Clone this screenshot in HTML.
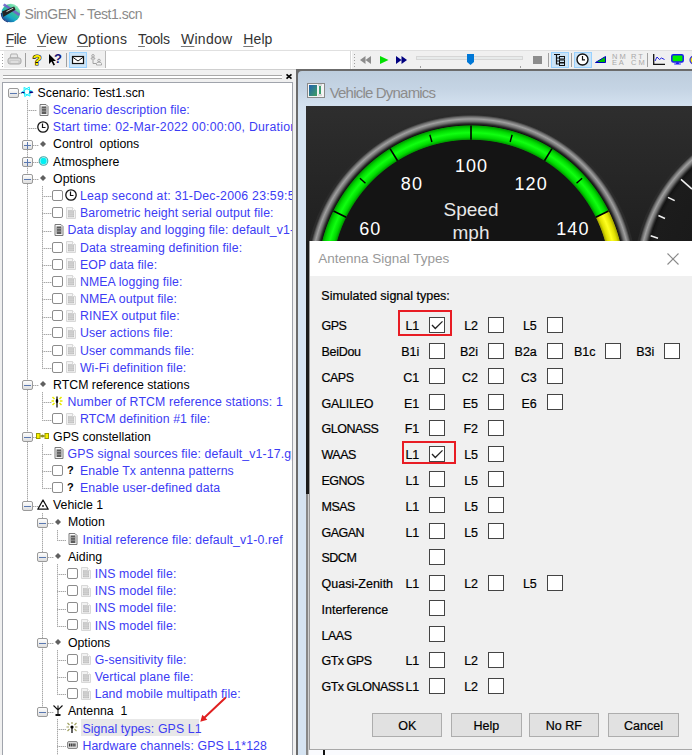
<!DOCTYPE html><html><head><meta charset="utf-8"><style>
html,body{margin:0;padding:0;}
body{width:692px;height:755px;overflow:hidden;position:relative;background:#fff;font-family:"Liberation Sans",sans-serif;}
.t{position:absolute;white-space:pre;}
.r{position:absolute;box-sizing:border-box;}
svg{position:absolute;overflow:visible;}
</style></head><body>
<svg style="left:0px;top:0px" width="24" height="26" viewBox="0 0 24 26">
<defs><linearGradient id="gl" x1="0.8" y1="0.05" x2="0.2" y2="0.95"><stop offset="0" stop-color="#a0f0c8"/><stop offset="0.35" stop-color="#3cc890"/><stop offset="0.7" stop-color="#18a8c8"/><stop offset="1" stop-color="#1a4c98"/></linearGradient></defs>
<circle cx="10.8" cy="13" r="9.3" fill="url(#gl)"/>
<path d="M1.3 13 A9.5 9.5 0 0 0 8 22" stroke="#1a3c80" stroke-width="1.2" fill="none"/>
<path d="M2.8 5.3 L4.6 3.4 L20.2 13.8 L18.8 16.2 Z" fill="#7060c8" opacity="0.9"/>
<path d="M2 11.5 L3.2 17 L15.5 9.8 L14.2 6.6 Z" fill="#242424"/>
<path d="M6.5 11.6 L13.3 8.2" stroke="#d8d8d8" stroke-width="1"/>
</svg>
<div class="t" style="left:24.50px;top:4.65px;font-size:14px;line-height:18.2px;color:#8a8a8a;letter-spacing:-0.45px;">SimGEN - Test1.scn</div>
<div class="t" style="left:5.70px;top:29.85px;font-size:14px;line-height:18.2px;color:#333;letter-spacing:-0.5px;"><u style="text-decoration-thickness:1px;text-underline-offset:2px;text-decoration-color:#777">F</u>ile</div>
<div class="t" style="left:37.00px;top:29.85px;font-size:14px;line-height:18.2px;color:#333;letter-spacing:0px;"><u style="text-decoration-thickness:1px;text-underline-offset:2px;text-decoration-color:#777">V</u>iew</div>
<div class="t" style="left:76.90px;top:29.85px;font-size:14px;line-height:18.2px;color:#333;letter-spacing:0.3px;"><u style="text-decoration-thickness:1px;text-underline-offset:2px;text-decoration-color:#777">O</u>ptions</div>
<div class="t" style="left:138.10px;top:29.85px;font-size:14px;line-height:18.2px;color:#333;letter-spacing:-0.2px;"><u style="text-decoration-thickness:1px;text-underline-offset:2px;text-decoration-color:#777">T</u>ools</div>
<div class="t" style="left:180.90px;top:29.85px;font-size:14px;line-height:18.2px;color:#333;letter-spacing:0.3px;"><u style="text-decoration-thickness:1px;text-underline-offset:2px;text-decoration-color:#777">W</u>indow</div>
<div class="t" style="left:243.30px;top:29.85px;font-size:14px;line-height:18.2px;color:#333;letter-spacing:0.1px;"><u style="text-decoration-thickness:1px;text-underline-offset:2px;text-decoration-color:#777">H</u>elp</div>
<div class="r" style="left:0px;top:50px;width:692px;height:1px;background:#e0e0e0"></div>
<div class="r" style="left:0px;top:51px;width:692px;height:18px;background:#fff"></div>
<div class="r" style="left:4px;top:51px;width:101px;height:17px;background:#f0f0f0"></div>
<div class="r" style="left:105px;top:51px;width:1px;height:17px;background:#b8b8b8"></div>
<div class="r" style="left:2px;top:54px;width:1px;height:1px;background:#a0a0a0"></div>
<div class="r" style="left:2px;top:57px;width:1px;height:1px;background:#a0a0a0"></div>
<div class="r" style="left:2px;top:60px;width:1px;height:1px;background:#a0a0a0"></div>
<div class="r" style="left:2px;top:63px;width:1px;height:1px;background:#a0a0a0"></div>
<div class="r" style="left:2px;top:66px;width:1px;height:1px;background:#a0a0a0"></div>
<div class="r" style="left:25px;top:53px;width:1px;height:14px;background:#a0a0a0"></div>
<div class="r" style="left:66px;top:53px;width:1px;height:14px;background:#a0a0a0"></div>
<div class="r" style="left:69px;top:51.5px;width:17.5px;height:16.5px;background:#cce4f7;border:1px solid #99d1ff"></div>
<svg style="left:7px;top:53px" width="15" height="13" viewBox="0 0 15 13"><path d="M4 1h6l1 4H3z" fill="#e8e8e8" stroke="#b0b0b0"/><rect x="1" y="5" width="13" height="6" rx="2" fill="#d8d8d8" stroke="#a8a8a8"/><rect x="3" y="8" width="9" height="2" fill="#f4f4f4" stroke="#b0b0b0" stroke-width=".6"/></svg>
<svg style="left:31px;top:52px" width="12" height="15" viewBox="0 0 12 15"><text x="6" y="13" text-anchor="middle" font-family="Liberation Sans" font-weight="bold" font-size="15" fill="#ffee00" stroke="#111" stroke-width="1.2" paint-order="stroke">?</text></svg>
<svg style="left:48px;top:54px" width="14" height="12" viewBox="0 0 14 12"><path d="M1 0 L1 10 L3.5 7.5 L5.5 11.5 L7 10.8 L5 7 L8 7 Z" fill="#000"/></svg>
<div class="t" style="left:54.00px;top:51.34px;font-size:13px;line-height:16.9px;color:#141478;font-weight:bold;">?</div>
<svg style="left:72px;top:56px" width="12" height="8" viewBox="0 0 12 8"><rect x="0.5" y="0.5" width="11" height="7" fill="#fff" stroke="#111" stroke-width="1.2"/><path d="M0.5 1 L6 5 L11.5 1" fill="none" stroke="#111" stroke-width="1"/></svg>
<svg style="left:90px;top:54px" width="12" height="12" viewBox="0 0 12 12"><circle cx="3" cy="1.8" r="1.3" fill="#e8e8e8" stroke="#999" stroke-width=".8"/><path d="M1 5 Q1 3.3 3 3.3 Q5 3.3 5 5 Z" fill="#f4f4f4" stroke="#999" stroke-width=".8"/><path d="M3 5.5 V9.5 H6" fill="none" stroke="#999" stroke-width=".9"/><circle cx="9" cy="6.5" r="1.3" fill="#e8e8e8" stroke="#999" stroke-width=".8"/><path d="M6.5 11 V9.5 Q6.5 8.2 9 8.2 Q11.5 8.2 11.5 9.5 V11 Z" fill="#f4f4f4" stroke="#999" stroke-width=".8"/></svg>
<div class="r" style="left:350px;top:51px;width:1px;height:18px;background:#d8d8d8"></div>
<div class="r" style="left:352px;top:51px;width:340px;height:18px;background:#f0f0f0"></div>
<div class="r" style="left:354px;top:54px;width:1px;height:1px;background:#a0a0a0"></div>
<div class="r" style="left:354px;top:57px;width:1px;height:1px;background:#a0a0a0"></div>
<div class="r" style="left:354px;top:60px;width:1px;height:1px;background:#a0a0a0"></div>
<div class="r" style="left:354px;top:63px;width:1px;height:1px;background:#a0a0a0"></div>
<div class="r" style="left:354px;top:66px;width:1px;height:1px;background:#a0a0a0"></div>
<svg style="left:360px;top:56px" width="12" height="8" viewBox="0 0 12 8"><path d="M5.5 0 L0 4 L5.5 8 Z M11 0 L5.5 4 L11 8 Z" fill="#8c8c8c"/></svg>
<svg style="left:380px;top:56px" width="9" height="8" viewBox="0 0 9 8"><path d="M0 0 L8.5 4 L0 8 Z" fill="#00e000"/></svg>
<svg style="left:396px;top:56px" width="11" height="8" viewBox="0 0 11 8"><path d="M0 0 L5.5 4 L0 8 Z M5.5 0 L11 4 L5.5 8 Z" fill="#000080"/></svg>
<div class="r" style="left:416px;top:55.5px;width:107px;height:4px;background:#e7eaea;border:1px solid #d6d6d6"></div>
<svg style="left:466.5px;top:53.5px" width="7" height="11" viewBox="0 0 7 11"><path d="M0 0 H7 V8 L3.5 11 L0 8 Z" fill="#0078d7"/></svg>
<div class="r" style="left:420px;top:65.5px;width:1px;height:2px;background:#a0a0a0"></div>
<div class="r" style="left:520px;top:65.5px;width:1px;height:2px;background:#a0a0a0"></div>
<div class="r" style="left:533px;top:56px;width:8.5px;height:7.5px;background:#8c8c8c"></div>
<div class="r" style="left:548px;top:53px;width:1px;height:14px;background:#a0a0a0"></div>
<div class="r" style="left:551px;top:51.5px;width:18px;height:16px;background:#cce4f7;border:1px solid #99d1ff"></div>
<svg style="left:553px;top:53px" width="14" height="13" viewBox="0 0 14 13"><path d="M1 1.5 H7 M3.5 1.5 V11.5 M3.5 5 H6 M3.5 8 H6 M3.5 11 H6" stroke="#111" stroke-width="1.2" fill="none"/><rect x="6.5" y="3.5" width="5" height="2.5" fill="none" stroke="#111"/><rect x="6.5" y="7" width="5" height="2.5" fill="none" stroke="#111"/><rect x="6.5" y="10" width="5" height="2.5" fill="none" stroke="#111"/></svg>
<div class="r" style="left:571px;top:53px;width:1px;height:14px;background:#a0a0a0"></div>
<div class="r" style="left:574px;top:51.5px;width:18px;height:16px;background:#cce4f7;border:1px solid #99d1ff"></div>
<svg style="left:576px;top:53px" width="13" height="13" viewBox="0 0 13 13"><circle cx="6.5" cy="6.5" r="5.5" fill="#fff" stroke="#111" stroke-width="1.4"/><path d="M6.5 3 V6.8 H9" stroke="#111" stroke-width="1.2" fill="none"/></svg>
<svg style="left:595px;top:56px" width="11" height="7" viewBox="0 0 11 7"><path d="M0.5 6.5 L10.5 0.5 V6.5 Z" fill="#00c000" stroke="#0000c0" stroke-width="1"/></svg>
<div class="t" style="left:612.00px;top:51.52px;font-size:7.5px;line-height:9.75px;color:#a8a8a8;font-weight:normal;">N M</div>
<div class="t" style="left:612.00px;top:57.82px;font-size:7.5px;line-height:9.75px;color:#a8a8a8;">E A</div>
<div class="t" style="left:631.00px;top:51.52px;font-size:7.5px;line-height:9.75px;color:#a8a8a8;">R T</div>
<div class="t" style="left:631.00px;top:57.82px;font-size:7.5px;line-height:9.75px;color:#a8a8a8;">C M</div>
<div class="r" style="left:647px;top:53px;width:1px;height:14px;background:#a0a0a0"></div>
<svg style="left:653px;top:54px" width="13" height="11" viewBox="0 0 13 11"><path d="M0.7 0 V10.3 H12" stroke="#111" stroke-width="1.3" fill="none"/><path d="M2 7 L4 3 L6.5 5.5 L8.5 4 L11.5 5.5" stroke="#2020e0" stroke-width="1" fill="none"/></svg>
<svg style="left:671px;top:54px" width="13" height="11" viewBox="0 0 13 11"><rect x="0.8" y="0.8" width="11.4" height="7.2" rx="1.5" fill="#00ee00" stroke="#1a1af0" stroke-width="1.5"/><path d="M5.5 8.2 H7.5 L8 9.6 H9.8 V10.6 H3.2 V9.6 H5 Z" fill="#1a1af0"/></svg>
<svg style="left:689px;top:55px" width="6" height="10" viewBox="0 0 6 10"><circle cx="5" cy="5" r="4" fill="#f0e000" stroke="#3030e0" stroke-width="1.2"/></svg>
<div class="r" style="left:0px;top:69px;width:296px;height:1px;background:#cfcfcf"></div>
<div class="r" style="left:0px;top:70px;width:296px;height:685px;background:#f0f0f0"></div>
<div class="r" style="left:3px;top:75px;width:279px;height:1px;background:#a8a8a8"></div>
<div class="r" style="left:3px;top:77.5px;width:279px;height:1px;background:#a8a8a8"></div>
<div class="r" style="left:3px;top:76px;width:279px;height:1.5px;background:#ffffff"></div>
<svg style="left:285.5px;top:74px" width="6" height="5" viewBox="0 0 6 5"><path d="M0.5 0.3 L5.5 4.7 M5.5 0.3 L0.5 4.7" stroke="#000" stroke-width="1.6"/></svg>
<div class="r" style="left:2px;top:82px;width:291px;height:673px;background:#fff;border:1px solid #a0a4ac;border-bottom:none"></div>
<div style="position:absolute;left:3px;top:83px;width:289px;height:672px;overflow:hidden">
<div class="r" style="left:24.00px;top:17.00px;width:1.00px;height:405.00px;background:repeating-linear-gradient(#a8a8a8 0 1px,#dcdcdc 1px 2px)"></div>
<div class="r" style="left:39.00px;top:103.00px;width:1.00px;height:182.00px;background:repeating-linear-gradient(#a8a8a8 0 1px,#dcdcdc 1px 2px)"></div>
<div class="r" style="left:39.00px;top:309.00px;width:1.00px;height:27.00px;background:repeating-linear-gradient(#a8a8a8 0 1px,#dcdcdc 1px 2px)"></div>
<div class="r" style="left:39.00px;top:361.00px;width:1.00px;height:45.00px;background:repeating-linear-gradient(#a8a8a8 0 1px,#dcdcdc 1px 2px)"></div>
<div class="r" style="left:39.00px;top:430.00px;width:1.00px;height:199.00px;background:repeating-linear-gradient(#a8a8a8 0 1px,#dcdcdc 1px 2px)"></div>
<div class="r" style="left:54.00px;top:447.00px;width:1.00px;height:10.00px;background:repeating-linear-gradient(#a8a8a8 0 1px,#dcdcdc 1px 2px)"></div>
<div class="r" style="left:54.00px;top:481.00px;width:1.00px;height:62.00px;background:repeating-linear-gradient(#a8a8a8 0 1px,#dcdcdc 1px 2px)"></div>
<div class="r" style="left:54.00px;top:567.00px;width:1.00px;height:45.00px;background:repeating-linear-gradient(#a8a8a8 0 1px,#dcdcdc 1px 2px)"></div>
<div class="r" style="left:54.00px;top:636.00px;width:1.00px;height:41.00px;background:repeating-linear-gradient(#a8a8a8 0 1px,#dcdcdc 1px 2px)"></div>
<div class="r" style="left:5.00px;top:5.00px;width:11.00px;height:10.00px;background:linear-gradient(#fdfdfd,#dedede);border:1px solid #9a9a9a;border-radius:2px"></div>
<div class="r" style="left:7.00px;top:10.00px;width:7.00px;height:1.00px;background:#5a78b0"></div>
<div class="r" style="left:16.00px;top:10.00px;width:3.00px;height:1.00px;background:repeating-linear-gradient(to right,#a8a8a8 0 1px,#dcdcdc 1px 2px)"></div>
<svg style="left:17px;top:3px" width="14" height="12" viewBox="0 0 14 12"><path d="M9.24 1.00 L10.04 10.14 L1.72 6.26 Z M12.28 5.34 L4.76 10.60 L3.96 1.46 Z" fill="none" stroke="#00eeff" stroke-width="0.9" stroke-linejoin="round"/><path d="M0.5 6.7 Q2 5.8 4.5 5.7 L4.5 7.2 Z M9.5 5.3 Q13 5.2 13.5 6.2 Q13 7.3 9.5 7.2 Z" fill="#000080"/></svg>
<div class="t" style="left:34.60px;top:2.94px;font-size:12.3px;line-height:15.99px;color:#000;letter-spacing:0px;">Scenario: Test1.scn</div>
<div class="r" style="left:24.00px;top:27.00px;width:9.80px;height:1.00px;background:repeating-linear-gradient(to right,#a8a8a8 0 1px,#dcdcdc 1px 2px)"></div>
<svg style="left:36px;top:21px" width="10" height="12" viewBox="0 0 10 12"><path d="M1 0.5 H7 L9 2.5 V11.5 H1 Z" fill="#f4f4f4" stroke="#7a7a7a" stroke-width="1"/><rect x="2.6" y="2.4" width="4.8" height="7.6" fill="#5c5c5c"/><path d="M2.6 4.6 H7.4 M2.6 7.2 H7.4" stroke="#a8a8a8" stroke-width=".8"/><path d="M2.6 1.6 H6" stroke="#fff" stroke-width="1"/></svg>
<div class="t" style="left:49.80px;top:20.12px;font-size:12.3px;line-height:15.99px;color:#3c3cf4;letter-spacing:0.12px;">Scenario description file:</div>
<div class="r" style="left:24.00px;top:45.00px;width:9.80px;height:1.00px;background:repeating-linear-gradient(to right,#a8a8a8 0 1px,#dcdcdc 1px 2px)"></div>
<svg style="left:34px;top:38px" width="12" height="12" viewBox="0 0 12 12"><circle cx="6" cy="6" r="5.2" fill="#fff" stroke="#111" stroke-width="1.3"/><path d="M5.5 2.5 V6.5 H8.5" stroke="#111" stroke-width="1.2" fill="none"/></svg>
<div class="t" style="left:49.80px;top:37.30px;font-size:12.3px;line-height:15.99px;color:#3c3cf4;letter-spacing:0.24px;">Start time: 02-Mar-2022 00:00:00, Duration</div>
<div class="r" style="left:24.00px;top:62.00px;width:11.80px;height:1.00px;background:repeating-linear-gradient(to right,#a8a8a8 0 1px,#dcdcdc 1px 2px)"></div>
<div class="r" style="left:19.00px;top:57.00px;width:11.00px;height:10.00px;background:linear-gradient(#fdfdfd,#dedede);border:1px solid #9a9a9a;border-radius:2px"></div>
<div class="r" style="left:21.00px;top:62.00px;width:7.00px;height:1.00px;background:#5a78b0"></div>
<div class="r" style="left:24.00px;top:59.00px;width:1.00px;height:7.00px;background:#5a78b0"></div>
<svg style="left:37px;top:58px" width="6" height="6" viewBox="0 0 6 6"><path d="M3 0 L6 3 L3 6 L0 3 Z" fill="#606060"/></svg>
<div class="t" style="left:50.10px;top:54.48px;font-size:12.3px;line-height:15.99px;color:#000;letter-spacing:0px;">Control  options</div>
<div class="r" style="left:24.00px;top:79.00px;width:11.80px;height:1.00px;background:repeating-linear-gradient(to right,#a8a8a8 0 1px,#dcdcdc 1px 2px)"></div>
<div class="r" style="left:19.00px;top:74.00px;width:11.00px;height:10.00px;background:linear-gradient(#fdfdfd,#dedede);border:1px solid #9a9a9a;border-radius:2px"></div>
<div class="r" style="left:21.00px;top:79.00px;width:7.00px;height:1.00px;background:#5a78b0"></div>
<div class="r" style="left:24.00px;top:76.00px;width:1.00px;height:7.00px;background:#5a78b0"></div>
<svg style="left:35px;top:73px" width="10" height="10" viewBox="0 0 10 10"><circle cx="5.5" cy="5" r="4.3" fill="#e8ffff" stroke="#40a8a8" stroke-width="1.1"/><circle cx="5.5" cy="5" r="3.2" fill="#00f0f4"/></svg>
<div class="t" style="left:50.10px;top:71.66px;font-size:12.3px;line-height:15.99px;color:#000;letter-spacing:0px;">Atmosphere</div>
<div class="r" style="left:24.00px;top:96.00px;width:11.80px;height:1.00px;background:repeating-linear-gradient(to right,#a8a8a8 0 1px,#dcdcdc 1px 2px)"></div>
<div class="r" style="left:19.00px;top:91.00px;width:11.00px;height:10.00px;background:linear-gradient(#fdfdfd,#dedede);border:1px solid #9a9a9a;border-radius:2px"></div>
<div class="r" style="left:21.00px;top:96.00px;width:7.00px;height:1.00px;background:#5a78b0"></div>
<svg style="left:37px;top:92px" width="6" height="6" viewBox="0 0 6 6"><path d="M3 0 L6 3 L3 6 L0 3 Z" fill="#606060"/></svg>
<div class="t" style="left:50.10px;top:88.84px;font-size:12.3px;line-height:15.99px;color:#000;letter-spacing:0px;">Options</div>
<div class="r" style="left:39.00px;top:113.00px;width:9.60px;height:1.00px;background:repeating-linear-gradient(to right,#a8a8a8 0 1px,#dcdcdc 1px 2px)"></div>
<div class="r" style="left:49.00px;top:107.00px;width:11.00px;height:11.00px;background:#fff;border:1px solid #8c8c8c;border-radius:2px"></div>
<svg style="left:62px;top:106px" width="12" height="12" viewBox="0 0 12 12"><circle cx="6" cy="6" r="5.2" fill="#fff" stroke="#111" stroke-width="1.3"/><path d="M5.5 2.5 V6.5 H8.5" stroke="#111" stroke-width="1.2" fill="none"/></svg>
<div class="t" style="left:76.90px;top:106.02px;font-size:12.3px;line-height:15.99px;color:#3c3cf4;letter-spacing:0.24px;">Leap second at: 31-Dec-2006 23:59:59</div>
<div class="r" style="left:39.00px;top:130.00px;width:9.60px;height:1.00px;background:repeating-linear-gradient(to right,#a8a8a8 0 1px,#dcdcdc 1px 2px)"></div>
<div class="r" style="left:49.00px;top:124.00px;width:11.00px;height:11.00px;background:#fff;border:1px solid #8c8c8c;border-radius:2px"></div>
<svg style="left:63px;top:124px" width="10" height="12" viewBox="0 0 10 12"><path d="M0.5 0.5 H6.5 L9.5 3.5 V11.5 H0.5 Z" fill="#f2f2f2" stroke="#d8d8d8" stroke-width="1"/><rect x="2" y="3.2" width="6" height="7" fill="#bdbdbd"/><path d="M2 5 H8 M2 6.8 H8 M2 8.6 H8 M4 3.2 V10.2 M6 3.2 V10.2" stroke="#dedede" stroke-width=".6"/><path d="M6.5 0.5 V3.5 H9.5" fill="#fff" stroke="#d0d0d0" stroke-width=".8"/></svg>
<div class="t" style="left:76.90px;top:123.20px;font-size:12.3px;line-height:15.99px;color:#3c3cf4;letter-spacing:0.12px;">Barometric height serial output file:</div>
<div class="r" style="left:39.00px;top:148.00px;width:9.60px;height:1.00px;background:repeating-linear-gradient(to right,#a8a8a8 0 1px,#dcdcdc 1px 2px)"></div>
<svg style="left:51px;top:141px" width="10" height="12" viewBox="0 0 10 12"><path d="M1 0.5 H7 L9 2.5 V11.5 H1 Z" fill="#f4f4f4" stroke="#7a7a7a" stroke-width="1"/><rect x="2.6" y="2.4" width="4.8" height="7.6" fill="#5c5c5c"/><path d="M2.6 4.6 H7.4 M2.6 7.2 H7.4" stroke="#a8a8a8" stroke-width=".8"/><path d="M2.6 1.6 H6" stroke="#fff" stroke-width="1"/></svg>
<div class="t" style="left:64.60px;top:140.38px;font-size:12.3px;line-height:15.99px;color:#3c3cf4;letter-spacing:0.12px;">Data display and logging file: default_v1-0</div>
<div class="r" style="left:39.00px;top:165.00px;width:9.60px;height:1.00px;background:repeating-linear-gradient(to right,#a8a8a8 0 1px,#dcdcdc 1px 2px)"></div>
<div class="r" style="left:49.00px;top:159.00px;width:11.00px;height:11.00px;background:#fff;border:1px solid #8c8c8c;border-radius:2px"></div>
<svg style="left:63px;top:158px" width="10" height="12" viewBox="0 0 10 12"><path d="M0.5 0.5 H6.5 L9.5 3.5 V11.5 H0.5 Z" fill="#f2f2f2" stroke="#d8d8d8" stroke-width="1"/><rect x="2" y="3.2" width="6" height="7" fill="#bdbdbd"/><path d="M2 5 H8 M2 6.8 H8 M2 8.6 H8 M4 3.2 V10.2 M6 3.2 V10.2" stroke="#dedede" stroke-width=".6"/><path d="M6.5 0.5 V3.5 H9.5" fill="#fff" stroke="#d0d0d0" stroke-width=".8"/></svg>
<div class="t" style="left:76.90px;top:157.56px;font-size:12.3px;line-height:15.99px;color:#3c3cf4;letter-spacing:0.12px;">Data streaming definition file:</div>
<div class="r" style="left:39.00px;top:182.00px;width:9.60px;height:1.00px;background:repeating-linear-gradient(to right,#a8a8a8 0 1px,#dcdcdc 1px 2px)"></div>
<div class="r" style="left:49.00px;top:176.00px;width:11.00px;height:11.00px;background:#fff;border:1px solid #8c8c8c;border-radius:2px"></div>
<svg style="left:63px;top:175px" width="10" height="12" viewBox="0 0 10 12"><path d="M0.5 0.5 H6.5 L9.5 3.5 V11.5 H0.5 Z" fill="#f2f2f2" stroke="#d8d8d8" stroke-width="1"/><rect x="2" y="3.2" width="6" height="7" fill="#bdbdbd"/><path d="M2 5 H8 M2 6.8 H8 M2 8.6 H8 M4 3.2 V10.2 M6 3.2 V10.2" stroke="#dedede" stroke-width=".6"/><path d="M6.5 0.5 V3.5 H9.5" fill="#fff" stroke="#d0d0d0" stroke-width=".8"/></svg>
<div class="t" style="left:76.90px;top:174.74px;font-size:12.3px;line-height:15.99px;color:#3c3cf4;letter-spacing:0.12px;">EOP data file:</div>
<div class="r" style="left:39.00px;top:199.00px;width:9.60px;height:1.00px;background:repeating-linear-gradient(to right,#a8a8a8 0 1px,#dcdcdc 1px 2px)"></div>
<div class="r" style="left:49.00px;top:193.00px;width:11.00px;height:11.00px;background:#fff;border:1px solid #8c8c8c;border-radius:2px"></div>
<svg style="left:63px;top:192px" width="10" height="12" viewBox="0 0 10 12"><path d="M0.5 0.5 H6.5 L9.5 3.5 V11.5 H0.5 Z" fill="#f2f2f2" stroke="#d8d8d8" stroke-width="1"/><rect x="2" y="3.2" width="6" height="7" fill="#bdbdbd"/><path d="M2 5 H8 M2 6.8 H8 M2 8.6 H8 M4 3.2 V10.2 M6 3.2 V10.2" stroke="#dedede" stroke-width=".6"/><path d="M6.5 0.5 V3.5 H9.5" fill="#fff" stroke="#d0d0d0" stroke-width=".8"/></svg>
<div class="t" style="left:76.90px;top:191.92px;font-size:12.3px;line-height:15.99px;color:#3c3cf4;letter-spacing:0.12px;">NMEA logging file:</div>
<div class="r" style="left:39.00px;top:216.00px;width:9.60px;height:1.00px;background:repeating-linear-gradient(to right,#a8a8a8 0 1px,#dcdcdc 1px 2px)"></div>
<div class="r" style="left:49.00px;top:210.00px;width:11.00px;height:11.00px;background:#fff;border:1px solid #8c8c8c;border-radius:2px"></div>
<svg style="left:63px;top:210px" width="10" height="12" viewBox="0 0 10 12"><path d="M0.5 0.5 H6.5 L9.5 3.5 V11.5 H0.5 Z" fill="#f2f2f2" stroke="#d8d8d8" stroke-width="1"/><rect x="2" y="3.2" width="6" height="7" fill="#bdbdbd"/><path d="M2 5 H8 M2 6.8 H8 M2 8.6 H8 M4 3.2 V10.2 M6 3.2 V10.2" stroke="#dedede" stroke-width=".6"/><path d="M6.5 0.5 V3.5 H9.5" fill="#fff" stroke="#d0d0d0" stroke-width=".8"/></svg>
<div class="t" style="left:76.90px;top:209.10px;font-size:12.3px;line-height:15.99px;color:#3c3cf4;letter-spacing:0.12px;">NMEA output file:</div>
<div class="r" style="left:39.00px;top:234.00px;width:9.60px;height:1.00px;background:repeating-linear-gradient(to right,#a8a8a8 0 1px,#dcdcdc 1px 2px)"></div>
<div class="r" style="left:49.00px;top:227.00px;width:11.00px;height:11.00px;background:#fff;border:1px solid #8c8c8c;border-radius:2px"></div>
<svg style="left:63px;top:227px" width="10" height="12" viewBox="0 0 10 12"><path d="M0.5 0.5 H6.5 L9.5 3.5 V11.5 H0.5 Z" fill="#f2f2f2" stroke="#d8d8d8" stroke-width="1"/><rect x="2" y="3.2" width="6" height="7" fill="#bdbdbd"/><path d="M2 5 H8 M2 6.8 H8 M2 8.6 H8 M4 3.2 V10.2 M6 3.2 V10.2" stroke="#dedede" stroke-width=".6"/><path d="M6.5 0.5 V3.5 H9.5" fill="#fff" stroke="#d0d0d0" stroke-width=".8"/></svg>
<div class="t" style="left:76.90px;top:226.28px;font-size:12.3px;line-height:15.99px;color:#3c3cf4;letter-spacing:0.12px;">RINEX output file:</div>
<div class="r" style="left:39.00px;top:251.00px;width:9.60px;height:1.00px;background:repeating-linear-gradient(to right,#a8a8a8 0 1px,#dcdcdc 1px 2px)"></div>
<div class="r" style="left:49.00px;top:244.00px;width:11.00px;height:11.00px;background:#fff;border:1px solid #8c8c8c;border-radius:2px"></div>
<svg style="left:63px;top:244px" width="10" height="12" viewBox="0 0 10 12"><path d="M0.5 0.5 H6.5 L9.5 3.5 V11.5 H0.5 Z" fill="#f2f2f2" stroke="#d8d8d8" stroke-width="1"/><rect x="2" y="3.2" width="6" height="7" fill="#bdbdbd"/><path d="M2 5 H8 M2 6.8 H8 M2 8.6 H8 M4 3.2 V10.2 M6 3.2 V10.2" stroke="#dedede" stroke-width=".6"/><path d="M6.5 0.5 V3.5 H9.5" fill="#fff" stroke="#d0d0d0" stroke-width=".8"/></svg>
<div class="t" style="left:76.90px;top:243.46px;font-size:12.3px;line-height:15.99px;color:#3c3cf4;letter-spacing:0.12px;">User actions file:</div>
<div class="r" style="left:39.00px;top:268.00px;width:9.60px;height:1.00px;background:repeating-linear-gradient(to right,#a8a8a8 0 1px,#dcdcdc 1px 2px)"></div>
<div class="r" style="left:49.00px;top:262.00px;width:11.00px;height:11.00px;background:#fff;border:1px solid #8c8c8c;border-radius:2px"></div>
<svg style="left:63px;top:261px" width="10" height="12" viewBox="0 0 10 12"><path d="M0.5 0.5 H6.5 L9.5 3.5 V11.5 H0.5 Z" fill="#f2f2f2" stroke="#d8d8d8" stroke-width="1"/><rect x="2" y="3.2" width="6" height="7" fill="#bdbdbd"/><path d="M2 5 H8 M2 6.8 H8 M2 8.6 H8 M4 3.2 V10.2 M6 3.2 V10.2" stroke="#dedede" stroke-width=".6"/><path d="M6.5 0.5 V3.5 H9.5" fill="#fff" stroke="#d0d0d0" stroke-width=".8"/></svg>
<div class="t" style="left:76.90px;top:260.64px;font-size:12.3px;line-height:15.99px;color:#3c3cf4;letter-spacing:0.12px;">User commands file:</div>
<div class="r" style="left:39.00px;top:285.00px;width:9.60px;height:1.00px;background:repeating-linear-gradient(to right,#a8a8a8 0 1px,#dcdcdc 1px 2px)"></div>
<div class="r" style="left:49.00px;top:279.00px;width:11.00px;height:11.00px;background:#fff;border:1px solid #8c8c8c;border-radius:2px"></div>
<svg style="left:63px;top:278px" width="10" height="12" viewBox="0 0 10 12"><path d="M0.5 0.5 H6.5 L9.5 3.5 V11.5 H0.5 Z" fill="#f2f2f2" stroke="#d8d8d8" stroke-width="1"/><rect x="2" y="3.2" width="6" height="7" fill="#bdbdbd"/><path d="M2 5 H8 M2 6.8 H8 M2 8.6 H8 M4 3.2 V10.2 M6 3.2 V10.2" stroke="#dedede" stroke-width=".6"/><path d="M6.5 0.5 V3.5 H9.5" fill="#fff" stroke="#d0d0d0" stroke-width=".8"/></svg>
<div class="t" style="left:76.90px;top:277.82px;font-size:12.3px;line-height:15.99px;color:#3c3cf4;letter-spacing:0.12px;">Wi-Fi definition file:</div>
<div class="r" style="left:24.00px;top:302.00px;width:11.80px;height:1.00px;background:repeating-linear-gradient(to right,#a8a8a8 0 1px,#dcdcdc 1px 2px)"></div>
<div class="r" style="left:19.00px;top:297.00px;width:11.00px;height:10.00px;background:linear-gradient(#fdfdfd,#dedede);border:1px solid #9a9a9a;border-radius:2px"></div>
<div class="r" style="left:21.00px;top:302.00px;width:7.00px;height:1.00px;background:#5a78b0"></div>
<svg style="left:37px;top:298px" width="6" height="6" viewBox="0 0 6 6"><path d="M3 0 L6 3 L3 6 L0 3 Z" fill="#606060"/></svg>
<div class="t" style="left:50.10px;top:295.00px;font-size:12.3px;line-height:15.99px;color:#000;letter-spacing:0px;">RTCM reference stations</div>
<div class="r" style="left:39.00px;top:319.00px;width:9.60px;height:1.00px;background:repeating-linear-gradient(to right,#a8a8a8 0 1px,#dcdcdc 1px 2px)"></div>
<svg style="left:48px;top:313px" width="12" height="12" viewBox="0 0 12 12"><path d="M0.5 5 H3 M9 5 H11.5 M1.5 1 L3.5 3 M10.5 1 L8.5 3 M1.5 9 L3.5 7 M10.5 9 L8.5 7" stroke="#e8e800" stroke-width="1.6"/><path d="M6 0.5 V11.5" stroke="#111" stroke-width="1.3"/><ellipse cx="6" cy="5" rx="1.3" ry="2" fill="#000"/></svg>
<div class="t" style="left:64.60px;top:312.18px;font-size:12.3px;line-height:15.99px;color:#3c3cf4;letter-spacing:0.12px;">Number of RTCM reference stations: 1</div>
<div class="r" style="left:39.00px;top:337.00px;width:9.60px;height:1.00px;background:repeating-linear-gradient(to right,#a8a8a8 0 1px,#dcdcdc 1px 2px)"></div>
<div class="r" style="left:49.00px;top:330.00px;width:11.00px;height:11.00px;background:#fff;border:1px solid #8c8c8c;border-radius:2px"></div>
<svg style="left:63px;top:330px" width="10" height="12" viewBox="0 0 10 12"><path d="M0.5 0.5 H6.5 L9.5 3.5 V11.5 H0.5 Z" fill="#f2f2f2" stroke="#d8d8d8" stroke-width="1"/><rect x="2" y="3.2" width="6" height="7" fill="#bdbdbd"/><path d="M2 5 H8 M2 6.8 H8 M2 8.6 H8 M4 3.2 V10.2 M6 3.2 V10.2" stroke="#dedede" stroke-width=".6"/><path d="M6.5 0.5 V3.5 H9.5" fill="#fff" stroke="#d0d0d0" stroke-width=".8"/></svg>
<div class="t" style="left:76.90px;top:329.36px;font-size:12.3px;line-height:15.99px;color:#3c3cf4;letter-spacing:0.12px;">RTCM definition #1 file:</div>
<div class="r" style="left:24.00px;top:354.00px;width:11.80px;height:1.00px;background:repeating-linear-gradient(to right,#a8a8a8 0 1px,#dcdcdc 1px 2px)"></div>
<div class="r" style="left:19.00px;top:349.00px;width:11.00px;height:10.00px;background:linear-gradient(#fdfdfd,#dedede);border:1px solid #9a9a9a;border-radius:2px"></div>
<div class="r" style="left:21.00px;top:354.00px;width:7.00px;height:1.00px;background:#5a78b0"></div>
<svg style="left:33px;top:350px" width="13" height="6" viewBox="0 0 13 6"><rect x="0.5" y="0.5" width="3.5" height="5" fill="#f8f000" stroke="#9a9a00" stroke-width="1"/><rect x="9" y="0.5" width="3.5" height="5" fill="#f8f000" stroke="#9a9a00" stroke-width="1"/><path d="M4 3 H9" stroke="#8a8a00" stroke-width="1"/><circle cx="6.5" cy="3" r="1.5" fill="#8a8a20"/></svg>
<div class="t" style="left:50.10px;top:346.54px;font-size:12.3px;line-height:15.99px;color:#000;letter-spacing:0px;">GPS constellation</div>
<div class="r" style="left:39.00px;top:371.00px;width:9.60px;height:1.00px;background:repeating-linear-gradient(to right,#a8a8a8 0 1px,#dcdcdc 1px 2px)"></div>
<svg style="left:51px;top:364px" width="10" height="12" viewBox="0 0 10 12"><path d="M1 0.5 H7 L9 2.5 V11.5 H1 Z" fill="#f4f4f4" stroke="#7a7a7a" stroke-width="1"/><rect x="2.6" y="2.4" width="4.8" height="7.6" fill="#5c5c5c"/><path d="M2.6 4.6 H7.4 M2.6 7.2 H7.4" stroke="#a8a8a8" stroke-width=".8"/><path d="M2.6 1.6 H6" stroke="#fff" stroke-width="1"/></svg>
<div class="t" style="left:64.60px;top:363.72px;font-size:12.3px;line-height:15.99px;color:#3c3cf4;letter-spacing:0.12px;">GPS signal sources file: default_v1-17.gps</div>
<div class="r" style="left:39.00px;top:388.00px;width:9.60px;height:1.00px;background:repeating-linear-gradient(to right,#a8a8a8 0 1px,#dcdcdc 1px 2px)"></div>
<div class="r" style="left:49.00px;top:382.00px;width:11.00px;height:11.00px;background:#fff;border:1px solid #8c8c8c;border-radius:2px"></div>
<div class="t" style="left:64px;top:382px;font-size:11px;line-height:11px;font-weight:bold;color:#000">?</div>
<div class="t" style="left:76.90px;top:380.90px;font-size:12.3px;line-height:15.99px;color:#3c3cf4;letter-spacing:0.12px;">Enable Tx antenna patterns</div>
<div class="r" style="left:39.00px;top:405.00px;width:9.60px;height:1.00px;background:repeating-linear-gradient(to right,#a8a8a8 0 1px,#dcdcdc 1px 2px)"></div>
<div class="r" style="left:49.00px;top:399.00px;width:11.00px;height:11.00px;background:#fff;border:1px solid #8c8c8c;border-radius:2px"></div>
<div class="t" style="left:64px;top:399px;font-size:11px;line-height:11px;font-weight:bold;color:#000">?</div>
<div class="t" style="left:76.90px;top:398.08px;font-size:12.3px;line-height:15.99px;color:#3c3cf4;letter-spacing:0.12px;">Enable user-defined data</div>
<div class="r" style="left:24.00px;top:423.00px;width:11.80px;height:1.00px;background:repeating-linear-gradient(to right,#a8a8a8 0 1px,#dcdcdc 1px 2px)"></div>
<div class="r" style="left:19.00px;top:418.00px;width:11.00px;height:10.00px;background:linear-gradient(#fdfdfd,#dedede);border:1px solid #9a9a9a;border-radius:2px"></div>
<div class="r" style="left:21.00px;top:423.00px;width:7.00px;height:1.00px;background:#5a78b0"></div>
<svg style="left:34px;top:416px" width="12" height="11" viewBox="0 0 12 11"><path d="M6 1 L11.2 10.2 H0.8 Z" fill="#fff" stroke="#111" stroke-width="1.3" stroke-linejoin="round"/><circle cx="6" cy="7" r="0.9" fill="#000"/></svg>
<div class="t" style="left:50.10px;top:415.26px;font-size:12.3px;line-height:15.99px;color:#000;letter-spacing:0px;">Vehicle 1</div>
<div class="r" style="left:39.00px;top:440.00px;width:11.60px;height:1.00px;background:repeating-linear-gradient(to right,#a8a8a8 0 1px,#dcdcdc 1px 2px)"></div>
<div class="r" style="left:34.00px;top:435.00px;width:11.00px;height:10.00px;background:linear-gradient(#fdfdfd,#dedede);border:1px solid #9a9a9a;border-radius:2px"></div>
<div class="r" style="left:36.00px;top:440.00px;width:7.00px;height:1.00px;background:#5a78b0"></div>
<svg style="left:52px;top:436px" width="6" height="6" viewBox="0 0 6 6"><path d="M3 0 L6 3 L3 6 L0 3 Z" fill="#606060"/></svg>
<div class="t" style="left:64.90px;top:432.44px;font-size:12.3px;line-height:15.99px;color:#000;letter-spacing:0px;">Motion</div>
<div class="r" style="left:54.00px;top:457.00px;width:9.40px;height:1.00px;background:repeating-linear-gradient(to right,#a8a8a8 0 1px,#dcdcdc 1px 2px)"></div>
<svg style="left:65px;top:450px" width="10" height="12" viewBox="0 0 10 12"><path d="M1 0.5 H7 L9 2.5 V11.5 H1 Z" fill="#f4f4f4" stroke="#7a7a7a" stroke-width="1"/><rect x="2.6" y="2.4" width="4.8" height="7.6" fill="#5c5c5c"/><path d="M2.6 4.6 H7.4 M2.6 7.2 H7.4" stroke="#a8a8a8" stroke-width=".8"/><path d="M2.6 1.6 H6" stroke="#fff" stroke-width="1"/></svg>
<div class="t" style="left:79.40px;top:449.62px;font-size:12.3px;line-height:15.99px;color:#3c3cf4;letter-spacing:0.12px;">Initial reference file: default_v1-0.ref</div>
<div class="r" style="left:39.00px;top:474.00px;width:11.60px;height:1.00px;background:repeating-linear-gradient(to right,#a8a8a8 0 1px,#dcdcdc 1px 2px)"></div>
<div class="r" style="left:34.00px;top:469.00px;width:11.00px;height:10.00px;background:linear-gradient(#fdfdfd,#dedede);border:1px solid #9a9a9a;border-radius:2px"></div>
<div class="r" style="left:36.00px;top:474.00px;width:7.00px;height:1.00px;background:#5a78b0"></div>
<svg style="left:52px;top:470px" width="6" height="6" viewBox="0 0 6 6"><path d="M3 0 L6 3 L3 6 L0 3 Z" fill="#606060"/></svg>
<div class="t" style="left:64.90px;top:466.80px;font-size:12.3px;line-height:15.99px;color:#000;letter-spacing:0px;">Aiding</div>
<div class="r" style="left:54.00px;top:491.00px;width:9.40px;height:1.00px;background:repeating-linear-gradient(to right,#a8a8a8 0 1px,#dcdcdc 1px 2px)"></div>
<div class="r" style="left:64.00px;top:485.00px;width:11.00px;height:11.00px;background:#fff;border:1px solid #8c8c8c;border-radius:2px"></div>
<svg style="left:78px;top:484px" width="10" height="12" viewBox="0 0 10 12"><path d="M0.5 0.5 H6.5 L9.5 3.5 V11.5 H0.5 Z" fill="#f2f2f2" stroke="#d8d8d8" stroke-width="1"/><rect x="2" y="3.2" width="6" height="7" fill="#bdbdbd"/><path d="M2 5 H8 M2 6.8 H8 M2 8.6 H8 M4 3.2 V10.2 M6 3.2 V10.2" stroke="#dedede" stroke-width=".6"/><path d="M6.5 0.5 V3.5 H9.5" fill="#fff" stroke="#d0d0d0" stroke-width=".8"/></svg>
<div class="t" style="left:91.70px;top:483.98px;font-size:12.3px;line-height:15.99px;color:#3c3cf4;letter-spacing:0.12px;">INS model file:</div>
<div class="r" style="left:54.00px;top:508.00px;width:9.40px;height:1.00px;background:repeating-linear-gradient(to right,#a8a8a8 0 1px,#dcdcdc 1px 2px)"></div>
<div class="r" style="left:64.00px;top:502.00px;width:11.00px;height:11.00px;background:#fff;border:1px solid #8c8c8c;border-radius:2px"></div>
<svg style="left:78px;top:502px" width="10" height="12" viewBox="0 0 10 12"><path d="M0.5 0.5 H6.5 L9.5 3.5 V11.5 H0.5 Z" fill="#f2f2f2" stroke="#d8d8d8" stroke-width="1"/><rect x="2" y="3.2" width="6" height="7" fill="#bdbdbd"/><path d="M2 5 H8 M2 6.8 H8 M2 8.6 H8 M4 3.2 V10.2 M6 3.2 V10.2" stroke="#dedede" stroke-width=".6"/><path d="M6.5 0.5 V3.5 H9.5" fill="#fff" stroke="#d0d0d0" stroke-width=".8"/></svg>
<div class="t" style="left:91.70px;top:501.16px;font-size:12.3px;line-height:15.99px;color:#3c3cf4;letter-spacing:0.12px;">INS model file:</div>
<div class="r" style="left:54.00px;top:526.00px;width:9.40px;height:1.00px;background:repeating-linear-gradient(to right,#a8a8a8 0 1px,#dcdcdc 1px 2px)"></div>
<div class="r" style="left:64.00px;top:519.00px;width:11.00px;height:11.00px;background:#fff;border:1px solid #8c8c8c;border-radius:2px"></div>
<svg style="left:78px;top:519px" width="10" height="12" viewBox="0 0 10 12"><path d="M0.5 0.5 H6.5 L9.5 3.5 V11.5 H0.5 Z" fill="#f2f2f2" stroke="#d8d8d8" stroke-width="1"/><rect x="2" y="3.2" width="6" height="7" fill="#bdbdbd"/><path d="M2 5 H8 M2 6.8 H8 M2 8.6 H8 M4 3.2 V10.2 M6 3.2 V10.2" stroke="#dedede" stroke-width=".6"/><path d="M6.5 0.5 V3.5 H9.5" fill="#fff" stroke="#d0d0d0" stroke-width=".8"/></svg>
<div class="t" style="left:91.70px;top:518.34px;font-size:12.3px;line-height:15.99px;color:#3c3cf4;letter-spacing:0.12px;">INS model file:</div>
<div class="r" style="left:54.00px;top:543.00px;width:9.40px;height:1.00px;background:repeating-linear-gradient(to right,#a8a8a8 0 1px,#dcdcdc 1px 2px)"></div>
<div class="r" style="left:64.00px;top:536.00px;width:11.00px;height:11.00px;background:#fff;border:1px solid #8c8c8c;border-radius:2px"></div>
<svg style="left:78px;top:536px" width="10" height="12" viewBox="0 0 10 12"><path d="M0.5 0.5 H6.5 L9.5 3.5 V11.5 H0.5 Z" fill="#f2f2f2" stroke="#d8d8d8" stroke-width="1"/><rect x="2" y="3.2" width="6" height="7" fill="#bdbdbd"/><path d="M2 5 H8 M2 6.8 H8 M2 8.6 H8 M4 3.2 V10.2 M6 3.2 V10.2" stroke="#dedede" stroke-width=".6"/><path d="M6.5 0.5 V3.5 H9.5" fill="#fff" stroke="#d0d0d0" stroke-width=".8"/></svg>
<div class="t" style="left:91.70px;top:535.52px;font-size:12.3px;line-height:15.99px;color:#3c3cf4;letter-spacing:0.12px;">INS model file:</div>
<div class="r" style="left:39.00px;top:560.00px;width:11.60px;height:1.00px;background:repeating-linear-gradient(to right,#a8a8a8 0 1px,#dcdcdc 1px 2px)"></div>
<div class="r" style="left:34.00px;top:555.00px;width:11.00px;height:10.00px;background:linear-gradient(#fdfdfd,#dedede);border:1px solid #9a9a9a;border-radius:2px"></div>
<div class="r" style="left:36.00px;top:560.00px;width:7.00px;height:1.00px;background:#5a78b0"></div>
<svg style="left:52px;top:556px" width="6" height="6" viewBox="0 0 6 6"><path d="M3 0 L6 3 L3 6 L0 3 Z" fill="#606060"/></svg>
<div class="t" style="left:64.90px;top:552.70px;font-size:12.3px;line-height:15.99px;color:#000;letter-spacing:0px;">Options</div>
<div class="r" style="left:54.00px;top:577.00px;width:9.40px;height:1.00px;background:repeating-linear-gradient(to right,#a8a8a8 0 1px,#dcdcdc 1px 2px)"></div>
<div class="r" style="left:64.00px;top:571.00px;width:11.00px;height:11.00px;background:#fff;border:1px solid #8c8c8c;border-radius:2px"></div>
<svg style="left:78px;top:570px" width="10" height="12" viewBox="0 0 10 12"><path d="M0.5 0.5 H6.5 L9.5 3.5 V11.5 H0.5 Z" fill="#f2f2f2" stroke="#d8d8d8" stroke-width="1"/><rect x="2" y="3.2" width="6" height="7" fill="#bdbdbd"/><path d="M2 5 H8 M2 6.8 H8 M2 8.6 H8 M4 3.2 V10.2 M6 3.2 V10.2" stroke="#dedede" stroke-width=".6"/><path d="M6.5 0.5 V3.5 H9.5" fill="#fff" stroke="#d0d0d0" stroke-width=".8"/></svg>
<div class="t" style="left:91.70px;top:569.88px;font-size:12.3px;line-height:15.99px;color:#3c3cf4;letter-spacing:0.12px;">G-sensitivity file:</div>
<div class="r" style="left:54.00px;top:594.00px;width:9.40px;height:1.00px;background:repeating-linear-gradient(to right,#a8a8a8 0 1px,#dcdcdc 1px 2px)"></div>
<div class="r" style="left:64.00px;top:588.00px;width:11.00px;height:11.00px;background:#fff;border:1px solid #8c8c8c;border-radius:2px"></div>
<svg style="left:78px;top:588px" width="10" height="12" viewBox="0 0 10 12"><path d="M0.5 0.5 H6.5 L9.5 3.5 V11.5 H0.5 Z" fill="#f2f2f2" stroke="#d8d8d8" stroke-width="1"/><rect x="2" y="3.2" width="6" height="7" fill="#bdbdbd"/><path d="M2 5 H8 M2 6.8 H8 M2 8.6 H8 M4 3.2 V10.2 M6 3.2 V10.2" stroke="#dedede" stroke-width=".6"/><path d="M6.5 0.5 V3.5 H9.5" fill="#fff" stroke="#d0d0d0" stroke-width=".8"/></svg>
<div class="t" style="left:91.70px;top:587.06px;font-size:12.3px;line-height:15.99px;color:#3c3cf4;letter-spacing:0.12px;">Vertical plane file:</div>
<div class="r" style="left:54.00px;top:611.00px;width:9.40px;height:1.00px;background:repeating-linear-gradient(to right,#a8a8a8 0 1px,#dcdcdc 1px 2px)"></div>
<div class="r" style="left:64.00px;top:605.00px;width:11.00px;height:11.00px;background:#fff;border:1px solid #8c8c8c;border-radius:2px"></div>
<svg style="left:78px;top:605px" width="10" height="12" viewBox="0 0 10 12"><path d="M0.5 0.5 H6.5 L9.5 3.5 V11.5 H0.5 Z" fill="#f2f2f2" stroke="#d8d8d8" stroke-width="1"/><rect x="2" y="3.2" width="6" height="7" fill="#bdbdbd"/><path d="M2 5 H8 M2 6.8 H8 M2 8.6 H8 M4 3.2 V10.2 M6 3.2 V10.2" stroke="#dedede" stroke-width=".6"/><path d="M6.5 0.5 V3.5 H9.5" fill="#fff" stroke="#d0d0d0" stroke-width=".8"/></svg>
<div class="t" style="left:91.70px;top:604.24px;font-size:12.3px;line-height:15.99px;color:#3c3cf4;letter-spacing:0.12px;">Land mobile multipath file:</div>
<div class="r" style="left:39.00px;top:629.00px;width:11.60px;height:1.00px;background:repeating-linear-gradient(to right,#a8a8a8 0 1px,#dcdcdc 1px 2px)"></div>
<div class="r" style="left:34.00px;top:624.00px;width:11.00px;height:10.00px;background:linear-gradient(#fdfdfd,#dedede);border:1px solid #9a9a9a;border-radius:2px"></div>
<div class="r" style="left:36.00px;top:629.00px;width:7.00px;height:1.00px;background:#5a78b0"></div>
<svg style="left:50px;top:622px" width="10" height="11" viewBox="0 0 10 11"><path d="M0.5 0.5 L5 5 L9.5 0.5 M5 0.5 V9.5" stroke="#111" stroke-width="1.1" fill="none"/><rect x="2.5" y="9" width="5" height="2" fill="#111"/></svg>
<div class="t" style="left:64.90px;top:621.42px;font-size:12.3px;line-height:15.99px;color:#000;letter-spacing:0px;">Antenna  1</div>
<div class="r" style="left:54.00px;top:646.00px;width:9.40px;height:1.00px;background:repeating-linear-gradient(to right,#a8a8a8 0 1px,#dcdcdc 1px 2px)"></div>
<svg style="left:63px;top:639px" width="12" height="12" viewBox="0 0 12 12"><path d="M0.5 5 H3 M9 5 H11.5 M1.5 1 L3.5 3 M10.5 1 L8.5 3 M1.5 9 L3.5 7 M10.5 9 L8.5 7 M6 0 V2" stroke="#a0a060" stroke-width="1.2"/><path d="M6 5 V11" stroke="#111" stroke-width="1.3"/><circle cx="6" cy="5" r="1.6" fill="#000"/></svg>
<div class="r" style="left:77.90px;top:636.36px;width:118.00px;height:16.50px;background:#e8e8e8"></div>
<div class="t" style="left:79.40px;top:638.60px;font-size:12.3px;line-height:15.99px;color:#3c3cf4;letter-spacing:0.12px;">Signal types: GPS L1</div>
<div class="r" style="left:54.00px;top:663.00px;width:9.40px;height:1.00px;background:repeating-linear-gradient(to right,#a8a8a8 0 1px,#dcdcdc 1px 2px)"></div>
<svg style="left:64px;top:658px" width="11" height="8" viewBox="0 0 11 8"><rect x="0.5" y="0.5" width="10" height="7" rx="1.5" fill="#d8d8d8" stroke="#888"/><path d="M2.5 2.5 V5.5 M4.3 2.5 V5.5 M6.1 2.5 V5.5 M7.9 2.5 V5.5" stroke="#333" stroke-width="1.2"/></svg>
<div class="t" style="left:79.40px;top:655.78px;font-size:12.3px;line-height:15.99px;color:#3c3cf4;letter-spacing:0.12px;">Hardware channels: GPS L1*128</div>
</div>
<svg style="left:0px;top:0px" width="692" height="755" viewBox="0 0 692 755"><path d="M225.2 698 L203.5 718.5" stroke="#e02020" stroke-width="2" stroke-linecap="round"/><path d="M200.3 721.8 L202.3 714.8 L207.3 719.8 Z" fill="#e02020"/></svg>
<div class="r" style="left:296px;top:69px;width:396px;height:686px;background:#6b6b6b"></div>
<div class="r" style="left:298px;top:71px;width:400px;height:690px;background:linear-gradient(#bdcddd,#c5d4e4 18px,#d3e1ef 34px,#d6e4f2 40px);border-radius:4px 0 0 0"></div>
<svg style="left:307px;top:83px" width="18" height="15" viewBox="0 0 18 15"><rect x="0.5" y="0.5" width="17" height="14" fill="#f4f4f4" stroke="#8a8a8a"/><rect x="2" y="2" width="8" height="11" fill="url(#vdg)"/><defs><linearGradient id="vdg" x1="0" y1="0" x2="1" y2="1"><stop offset="0" stop-color="#2060b0"/><stop offset="1" stop-color="#40a060"/></linearGradient></defs><rect x="12" y="3" width="2" height="8" fill="#40a070"/><path d="M11 2 H15 M11 12 H15" stroke="#bbb"/></svg>
<div class="t" style="left:329.70px;top:82.85px;font-size:15px;line-height:19.5px;color:#8c8c8c;letter-spacing:-0.8px;">Vehicle Dynamics</div>
<svg style="left:306px;top:105.6px;overflow:hidden" width="386" height="136" viewBox="306 105.6 386 136">
<defs>
<linearGradient id="bg" x1="0" y1="0" x2="0" y2="1"><stop offset="0" stop-color="#2e2e2e"/><stop offset="1" stop-color="#1f1f1f"/></linearGradient>
<radialGradient id="face" cx="0.5" cy="0.5" r="0.5"><stop offset="0.6" stop-color="#121212"/><stop offset="1" stop-color="#0a0a0a"/></radialGradient>
<linearGradient id="ring" x1="0" y1="0" x2="0" y2="1"><stop offset="0" stop-color="#8a8a8a"/><stop offset="1" stop-color="#5a5a5a"/></linearGradient>
</defs>
<rect x="306" y="105.6" width="386" height="136" fill="url(#bg)"/>
<defs>
<radialGradient id="g1" gradientUnits="userSpaceOnUse" cx="471" cy="278.6" r="166"><stop offset="0.0000" stop-color="#141414"/><stop offset="0.8361" stop-color="#141414"/><stop offset="0.8410" stop-color="#009a00"/><stop offset="0.8554" stop-color="#00d800"/><stop offset="0.8813" stop-color="#10ff10"/><stop offset="0.9066" stop-color="#00d800"/><stop offset="0.9229" stop-color="#009a00"/><stop offset="0.9277" stop-color="#121212"/><stop offset="0.9355" stop-color="#2a2a2a"/><stop offset="0.9488" stop-color="#6e6e6e"/><stop offset="0.9639" stop-color="#a0a0a0"/><stop offset="0.9777" stop-color="#6a6a6a"/><stop offset="0.9880" stop-color="#2c2c2c"/><stop offset="1.0000" stop-color="#2a2a2a"/></radialGradient>
<radialGradient id="g1y" gradientUnits="userSpaceOnUse" cx="471" cy="278.6" r="166"><stop offset="0.0000" stop-color="#141414"/><stop offset="0.8361" stop-color="#141414"/><stop offset="0.8410" stop-color="#a8a800"/><stop offset="0.8554" stop-color="#e0e000"/><stop offset="0.8813" stop-color="#ffff20"/><stop offset="0.9066" stop-color="#e0e000"/><stop offset="0.9229" stop-color="#a8a800"/><stop offset="0.9277" stop-color="#121212"/><stop offset="0.9355" stop-color="#2a2a2a"/><stop offset="0.9488" stop-color="#6e6e6e"/><stop offset="0.9639" stop-color="#a0a0a0"/><stop offset="0.9777" stop-color="#6a6a6a"/><stop offset="0.9880" stop-color="#2c2c2c"/><stop offset="1.0000" stop-color="#2a2a2a"/></radialGradient>
<radialGradient id="g2" gradientUnits="userSpaceOnUse" cx="799" cy="278.6" r="166"><stop offset="0.0000" stop-color="#141414"/><stop offset="0.9036" stop-color="#1c1c1c"/><stop offset="0.9229" stop-color="#161616"/><stop offset="0.9277" stop-color="#121212"/><stop offset="0.9355" stop-color="#2a2a2a"/><stop offset="0.9488" stop-color="#6e6e6e"/><stop offset="0.9639" stop-color="#a0a0a0"/><stop offset="0.9777" stop-color="#6a6a6a"/><stop offset="0.9880" stop-color="#2c2c2c"/><stop offset="1.0000" stop-color="#2a2a2a"/></radialGradient>
</defs>
<circle cx="471" cy="278.6" r="166" fill="url(#g1)"/>
<circle cx="799" cy="278.6" r="166" fill="url(#g2)"/>
<path d="M471 278.6 L619.82 205.05 L637 338.6 Z" fill="url(#g1y)" clip-path="url(#band)"/>
<clipPath id="band"><circle cx="471" cy="278.6" r="155"/></clipPath>
<line x1="360.42" y1="363.15" x2="349.14" y2="371.77" stroke="#000" stroke-width="1.6"/>
<line x1="338.39" y1="330.77" x2="331.41" y2="333.51" stroke="#000" stroke-width="1.4"/>
<line x1="332.45" y1="292.06" x2="318.32" y2="293.44" stroke="#000" stroke-width="1.6"/>
<line x1="330.83" y1="252.94" x2="323.45" y2="251.59" stroke="#000" stroke-width="1.4"/>
<line x1="346.21" y1="216.92" x2="333.48" y2="210.63" stroke="#000" stroke-width="1.6"/>
<line x1="365.48" y1="182.83" x2="359.92" y2="177.79" stroke="#000" stroke-width="1.4"/>
<line x1="397.54" y1="160.36" x2="390.05" y2="148.30" stroke="#000" stroke-width="1.6"/>
<line x1="431.90" y1="141.57" x2="429.84" y2="134.36" stroke="#000" stroke-width="1.4"/>
<line x1="471.00" y1="139.40" x2="471.00" y2="125.20" stroke="#000" stroke-width="1.6"/>
<line x1="510.10" y1="141.57" x2="512.16" y2="134.36" stroke="#000" stroke-width="1.4"/>
<line x1="544.46" y1="160.36" x2="551.95" y2="148.30" stroke="#000" stroke-width="1.6"/>
<line x1="576.52" y1="182.83" x2="582.08" y2="177.79" stroke="#000" stroke-width="1.4"/>
<line x1="595.79" y1="216.92" x2="608.52" y2="210.63" stroke="#000" stroke-width="1.6"/>
<line x1="611.17" y1="252.94" x2="618.55" y2="251.59" stroke="#000" stroke-width="1.4"/>
<line x1="609.55" y1="292.06" x2="623.68" y2="293.44" stroke="#000" stroke-width="1.6"/>
<line x1="603.61" y1="330.77" x2="610.59" y2="333.51" stroke="#000" stroke-width="1.4"/>
<line x1="581.58" y1="363.15" x2="592.86" y2="371.77" stroke="#000" stroke-width="1.6"/>
<line x1="556.11" y1="392.89" x2="560.59" y2="398.91" stroke="#000" stroke-width="1.4"/>
<text x="370.25" y="235.03" font-family="Liberation Sans" font-size="18" fill="#fff" text-anchor="middle" letter-spacing="1.1">60</text>
<text x="411.92" y="189.11" font-family="Liberation Sans" font-size="18" fill="#fff" text-anchor="middle" letter-spacing="1.1">80</text>
<text x="471.55" y="172.10" font-family="Liberation Sans" font-size="18" fill="#fff" text-anchor="middle" letter-spacing="1.1">100</text>
<text x="531.18" y="189.11" font-family="Liberation Sans" font-size="18" fill="#fff" text-anchor="middle" letter-spacing="1.1">120</text>
<text x="572.85" y="235.03" font-family="Liberation Sans" font-size="18" fill="#fff" text-anchor="middle" letter-spacing="1.1">140</text>
<text x="471" y="216" font-family="Liberation Sans" font-size="19" fill="#e8e8e8" text-anchor="middle">Speed</text>
<text x="471" y="238.8" font-family="Liberation Sans" font-size="19" fill="#e8e8e8" text-anchor="middle">mph</text>
<line x1="681" y1="179" x2="692" y2="188.7" stroke="#f0f0f0" stroke-width="1.6"/>
<line x1="668" y1="197" x2="674.7" y2="200.2" stroke="#f0f0f0" stroke-width="1.6"/>
<line x1="658.4" y1="215.2" x2="665" y2="218" stroke="#f0f0f0" stroke-width="1.6"/>
<line x1="650.7" y1="235.3" x2="658" y2="237.8" stroke="#f0f0f0" stroke-width="1.6"/>
</svg>
<div class="r" style="left:306px;top:241px;width:3.5px;height:253px;background:#1a1a1a"></div>
<div class="r" style="left:306px;top:494px;width:1.5px;height:261px;background:#888"></div>
<div class="r" style="left:307.5px;top:494px;width:2px;height:261px;background:#d0d0d0"></div>
<div class="r" style="left:309px;top:749px;width:383px;height:6px;background:#fafbfe"></div>
<div class="r" style="left:322.5px;top:750px;width:2px;height:5px;background:#111"></div>
<div class="r" style="left:308.5px;top:241px;width:384px;height:508.5px;background:#f0f0f0;border-left:1px solid #9a9a9a;border-bottom:1px solid #a8a8a8"></div>
<div class="r" style="left:309.5px;top:241px;width:383px;height:34.5px;background:#fff"></div>
<div class="t" style="left:318.20px;top:249.94px;font-size:13.5px;line-height:17.55px;color:#999999;letter-spacing:0px;">Antenna Signal Types</div>
<svg style="left:667px;top:252.5px" width="12" height="12" viewBox="0 0 12 12"><path d="M0.5 0.5 L11.5 11.5 M11.5 0.5 L0.5 11.5" stroke="#8a8a8a" stroke-width="1.1"/></svg>
<div class="t" style="left:321.30px;top:287.54px;font-size:12.5px;line-height:16.25px;color:#000;-webkit-text-stroke:0.2px #000;">Simulated signal types:</div>
<div class="t" style="left:321.50px;top:318.34px;font-size:12.5px;line-height:16.25px;color:#000;letter-spacing:-0.5px;-webkit-text-stroke:0.2px #000;">GPS</div>
<div class="t" style="right:272.70px;top:318.34px;font-size:12.5px;line-height:16.25px;color:#000;-webkit-text-stroke:0.2px #000">L1</div>
<div class="r" style="left:429px;top:317px;width:16px;height:16px;background:#fff;border:1px solid #444"></div>
<svg style="left:429px;top:317px" width="16" height="16" viewBox="0 0 16 16"><path d="M3 8 L6.3 11.5 L13.5 4.4" fill="none" stroke="#222" stroke-width="1.3"/></svg>
<div class="t" style="right:213.95px;top:318.34px;font-size:12.5px;line-height:16.25px;color:#000;-webkit-text-stroke:0.2px #000">L2</div>
<div class="r" style="left:487.75px;top:317px;width:16px;height:16px;background:#fff;border:1px solid #444"></div>
<div class="t" style="right:155.20px;top:318.34px;font-size:12.5px;line-height:16.25px;color:#000;-webkit-text-stroke:0.2px #000">L5</div>
<div class="r" style="left:546.5px;top:317px;width:16px;height:16px;background:#fff;border:1px solid #444"></div>
<div class="t" style="left:321.50px;top:344.12px;font-size:12.5px;line-height:16.25px;color:#000;letter-spacing:-0.3px;-webkit-text-stroke:0.2px #000;">BeiDou</div>
<div class="t" style="right:272.70px;top:344.12px;font-size:12.5px;line-height:16.25px;color:#000;-webkit-text-stroke:0.2px #000">B1i</div>
<div class="r" style="left:429px;top:343px;width:16px;height:16px;background:#fff;border:1px solid #444"></div>
<div class="t" style="right:213.95px;top:344.12px;font-size:12.5px;line-height:16.25px;color:#000;-webkit-text-stroke:0.2px #000">B2i</div>
<div class="r" style="left:487.75px;top:343px;width:16px;height:16px;background:#fff;border:1px solid #444"></div>
<div class="t" style="right:155.20px;top:344.12px;font-size:12.5px;line-height:16.25px;color:#000;-webkit-text-stroke:0.2px #000">B2a</div>
<div class="r" style="left:546.5px;top:343px;width:16px;height:16px;background:#fff;border:1px solid #444"></div>
<div class="t" style="right:96.45px;top:344.12px;font-size:12.5px;line-height:16.25px;color:#000;-webkit-text-stroke:0.2px #000">B1c</div>
<div class="r" style="left:605.25px;top:343px;width:16px;height:16px;background:#fff;border:1px solid #444"></div>
<div class="t" style="right:37.70px;top:344.12px;font-size:12.5px;line-height:16.25px;color:#000;-webkit-text-stroke:0.2px #000">B3i</div>
<div class="r" style="left:664px;top:343px;width:16px;height:16px;background:#fff;border:1px solid #444"></div>
<div class="t" style="left:321.50px;top:369.90px;font-size:12.5px;line-height:16.25px;color:#000;letter-spacing:-0.5px;-webkit-text-stroke:0.2px #000;">CAPS</div>
<div class="t" style="right:272.70px;top:369.90px;font-size:12.5px;line-height:16.25px;color:#000;-webkit-text-stroke:0.2px #000">C1</div>
<div class="r" style="left:429px;top:368px;width:16px;height:16px;background:#fff;border:1px solid #444"></div>
<div class="t" style="right:213.95px;top:369.90px;font-size:12.5px;line-height:16.25px;color:#000;-webkit-text-stroke:0.2px #000">C2</div>
<div class="r" style="left:487.75px;top:368px;width:16px;height:16px;background:#fff;border:1px solid #444"></div>
<div class="t" style="right:155.20px;top:369.90px;font-size:12.5px;line-height:16.25px;color:#000;-webkit-text-stroke:0.2px #000">C3</div>
<div class="r" style="left:546.5px;top:368px;width:16px;height:16px;background:#fff;border:1px solid #444"></div>
<div class="t" style="left:321.50px;top:395.68px;font-size:12.5px;line-height:16.25px;color:#000;letter-spacing:-0.25px;-webkit-text-stroke:0.2px #000;">GALILEO</div>
<div class="t" style="right:272.70px;top:395.68px;font-size:12.5px;line-height:16.25px;color:#000;-webkit-text-stroke:0.2px #000">E1</div>
<div class="r" style="left:429px;top:394px;width:16px;height:16px;background:#fff;border:1px solid #444"></div>
<div class="t" style="right:213.95px;top:395.68px;font-size:12.5px;line-height:16.25px;color:#000;-webkit-text-stroke:0.2px #000">E5</div>
<div class="r" style="left:487.75px;top:394px;width:16px;height:16px;background:#fff;border:1px solid #444"></div>
<div class="t" style="right:155.20px;top:395.68px;font-size:12.5px;line-height:16.25px;color:#000;-webkit-text-stroke:0.2px #000">E6</div>
<div class="r" style="left:546.5px;top:394px;width:16px;height:16px;background:#fff;border:1px solid #444"></div>
<div class="t" style="left:321.50px;top:421.46px;font-size:12.5px;line-height:16.25px;color:#000;letter-spacing:-0.5px;-webkit-text-stroke:0.2px #000;">GLONASS</div>
<div class="t" style="right:272.70px;top:421.46px;font-size:12.5px;line-height:16.25px;color:#000;-webkit-text-stroke:0.2px #000">F1</div>
<div class="r" style="left:429px;top:420px;width:16px;height:16px;background:#fff;border:1px solid #444"></div>
<div class="t" style="right:213.95px;top:421.46px;font-size:12.5px;line-height:16.25px;color:#000;-webkit-text-stroke:0.2px #000">F2</div>
<div class="r" style="left:487.75px;top:420px;width:16px;height:16px;background:#fff;border:1px solid #444"></div>
<div class="t" style="left:321.50px;top:447.24px;font-size:12.5px;line-height:16.25px;color:#000;letter-spacing:-0.5px;-webkit-text-stroke:0.2px #000;">WAAS</div>
<div class="t" style="right:272.70px;top:447.24px;font-size:12.5px;line-height:16.25px;color:#000;-webkit-text-stroke:0.2px #000">L1</div>
<div class="r" style="left:429px;top:446px;width:16px;height:16px;background:#fff;border:1px solid #444"></div>
<svg style="left:429px;top:446px" width="16" height="16" viewBox="0 0 16 16"><path d="M3 8 L6.3 11.5 L13.5 4.4" fill="none" stroke="#222" stroke-width="1.3"/></svg>
<div class="t" style="right:213.95px;top:447.24px;font-size:12.5px;line-height:16.25px;color:#000;-webkit-text-stroke:0.2px #000">L5</div>
<div class="r" style="left:487.75px;top:446px;width:16px;height:16px;background:#fff;border:1px solid #444"></div>
<div class="t" style="left:321.50px;top:473.02px;font-size:12.5px;line-height:16.25px;color:#000;letter-spacing:-0.5px;-webkit-text-stroke:0.2px #000;">EGNOS</div>
<div class="t" style="right:272.70px;top:473.02px;font-size:12.5px;line-height:16.25px;color:#000;-webkit-text-stroke:0.2px #000">L1</div>
<div class="r" style="left:429px;top:471px;width:16px;height:16px;background:#fff;border:1px solid #444"></div>
<div class="t" style="right:213.95px;top:473.02px;font-size:12.5px;line-height:16.25px;color:#000;-webkit-text-stroke:0.2px #000">L5</div>
<div class="r" style="left:487.75px;top:471px;width:16px;height:16px;background:#fff;border:1px solid #444"></div>
<div class="t" style="left:321.50px;top:498.80px;font-size:12.5px;line-height:16.25px;color:#000;letter-spacing:-0.5px;-webkit-text-stroke:0.2px #000;">MSAS</div>
<div class="t" style="right:272.70px;top:498.80px;font-size:12.5px;line-height:16.25px;color:#000;-webkit-text-stroke:0.2px #000">L1</div>
<div class="r" style="left:429px;top:497px;width:16px;height:16px;background:#fff;border:1px solid #444"></div>
<div class="t" style="right:213.95px;top:498.80px;font-size:12.5px;line-height:16.25px;color:#000;-webkit-text-stroke:0.2px #000">L5</div>
<div class="r" style="left:487.75px;top:497px;width:16px;height:16px;background:#fff;border:1px solid #444"></div>
<div class="t" style="left:321.50px;top:524.58px;font-size:12.5px;line-height:16.25px;color:#000;letter-spacing:-0.5px;-webkit-text-stroke:0.2px #000;">GAGAN</div>
<div class="t" style="right:272.70px;top:524.58px;font-size:12.5px;line-height:16.25px;color:#000;-webkit-text-stroke:0.2px #000">L1</div>
<div class="r" style="left:429px;top:523px;width:16px;height:16px;background:#fff;border:1px solid #444"></div>
<div class="t" style="right:213.95px;top:524.58px;font-size:12.5px;line-height:16.25px;color:#000;-webkit-text-stroke:0.2px #000">L5</div>
<div class="r" style="left:487.75px;top:523px;width:16px;height:16px;background:#fff;border:1px solid #444"></div>
<div class="t" style="left:321.50px;top:550.36px;font-size:12.5px;line-height:16.25px;color:#000;letter-spacing:-0.5px;-webkit-text-stroke:0.2px #000;">SDCM</div>
<div class="r" style="left:429px;top:549px;width:16px;height:16px;background:#fff;border:1px solid #444"></div>
<div class="t" style="left:321.50px;top:576.14px;font-size:12.5px;line-height:16.25px;color:#000;-webkit-text-stroke:0.2px #000;">Quasi-Zenith</div>
<div class="t" style="right:272.70px;top:576.14px;font-size:12.5px;line-height:16.25px;color:#000;-webkit-text-stroke:0.2px #000">L1</div>
<div class="r" style="left:429px;top:575px;width:16px;height:16px;background:#fff;border:1px solid #444"></div>
<div class="t" style="right:213.95px;top:576.14px;font-size:12.5px;line-height:16.25px;color:#000;-webkit-text-stroke:0.2px #000">L2</div>
<div class="r" style="left:487.75px;top:575px;width:16px;height:16px;background:#fff;border:1px solid #444"></div>
<div class="t" style="right:155.20px;top:576.14px;font-size:12.5px;line-height:16.25px;color:#000;-webkit-text-stroke:0.2px #000">L5</div>
<div class="r" style="left:546.5px;top:575px;width:16px;height:16px;background:#fff;border:1px solid #444"></div>
<div class="t" style="left:321.50px;top:601.92px;font-size:12.5px;line-height:16.25px;color:#000;-webkit-text-stroke:0.2px #000;">Interference</div>
<div class="r" style="left:429px;top:600px;width:16px;height:16px;background:#fff;border:1px solid #444"></div>
<div class="t" style="left:321.50px;top:627.70px;font-size:12.5px;line-height:16.25px;color:#000;letter-spacing:-0.5px;-webkit-text-stroke:0.2px #000;">LAAS</div>
<div class="r" style="left:429px;top:626px;width:16px;height:16px;background:#fff;border:1px solid #444"></div>
<div class="t" style="left:321.50px;top:653.48px;font-size:12.5px;line-height:16.25px;color:#000;letter-spacing:-0.5px;-webkit-text-stroke:0.2px #000;">GTx GPS</div>
<div class="t" style="right:272.70px;top:653.48px;font-size:12.5px;line-height:16.25px;color:#000;-webkit-text-stroke:0.2px #000">L1</div>
<div class="r" style="left:429px;top:652px;width:16px;height:16px;background:#fff;border:1px solid #444"></div>
<div class="t" style="right:213.95px;top:653.48px;font-size:12.5px;line-height:16.25px;color:#000;-webkit-text-stroke:0.2px #000">L2</div>
<div class="r" style="left:487.75px;top:652px;width:16px;height:16px;background:#fff;border:1px solid #444"></div>
<div class="t" style="left:321.50px;top:679.26px;font-size:12.5px;line-height:16.25px;color:#000;letter-spacing:-0.5px;-webkit-text-stroke:0.2px #000;">GTx GLONASS</div>
<div class="t" style="right:272.70px;top:679.26px;font-size:12.5px;line-height:16.25px;color:#000;-webkit-text-stroke:0.2px #000">L1</div>
<div class="r" style="left:429px;top:678px;width:16px;height:16px;background:#fff;border:1px solid #444"></div>
<div class="t" style="right:213.95px;top:679.26px;font-size:12.5px;line-height:16.25px;color:#000;-webkit-text-stroke:0.2px #000">L2</div>
<div class="r" style="left:487.75px;top:678px;width:16px;height:16px;background:#fff;border:1px solid #444"></div>
<div class="r" style="left:398px;top:310.4px;width:54px;height:25.4px;border:2px solid #e81c24"></div>
<div class="r" style="left:402.1px;top:441.1px;width:53.8px;height:22.7px;border:2px solid #e81c24"></div>
<div class="r" style="left:372.3px;top:712.8px;width:70.0px;height:24px;background:#e1e1e1;border:1px solid #adadad"></div>
<div class="t" style="left:372.30px;width:70.00px;text-align:center;top:717.74px;font-size:12.5px;line-height:16.25px;color:#000;-webkit-text-stroke:0.2px #000">OK</div>
<div class="r" style="left:450.9px;top:712.8px;width:70.80000000000007px;height:24px;background:#e1e1e1;border:1px solid #adadad"></div>
<div class="t" style="left:450.90px;width:70.80px;text-align:center;top:717.74px;font-size:12.5px;line-height:16.25px;color:#000;-webkit-text-stroke:0.2px #000">Help</div>
<div class="r" style="left:528.7px;top:712.8px;width:70.39999999999998px;height:24px;background:#e1e1e1;border:1px solid #adadad"></div>
<div class="t" style="left:528.70px;width:70.40px;text-align:center;top:717.74px;font-size:12.5px;line-height:16.25px;color:#000;-webkit-text-stroke:0.2px #000">No RF</div>
<div class="r" style="left:608.3px;top:712.8px;width:70.40000000000009px;height:24px;background:#e1e1e1;border:1px solid #adadad"></div>
<div class="t" style="left:608.30px;width:70.40px;text-align:center;top:717.74px;font-size:12.5px;line-height:16.25px;color:#000;-webkit-text-stroke:0.2px #000">Cancel</div>
</body></html>
